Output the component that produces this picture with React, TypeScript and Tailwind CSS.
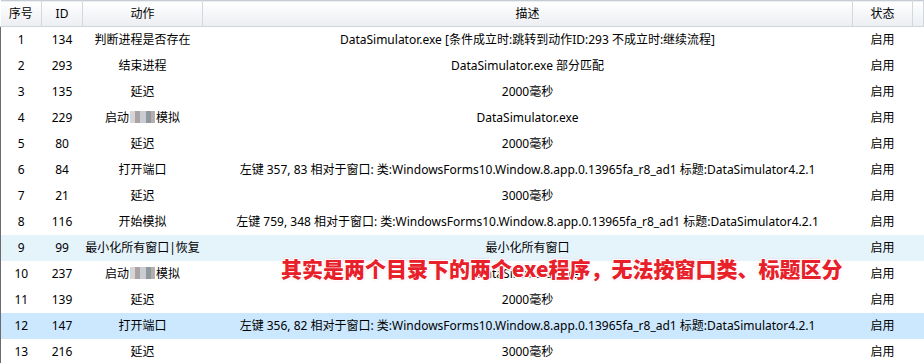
import React from "react";

interface Step {
  no: number;
  id: number;
  action: string;
  desc: string;
  state: string;
  blur?: boolean;
}

const steps: Step[] = [
  { no: 1, id: 134, action: "判断进程是否存在", desc: "DataSimulator.exe [条件成立时:跳转到动作ID:293 不成立时:继续流程]", state: "启用" },
  { no: 2, id: 293, action: "结束进程", desc: "DataSimulator.exe 部分匹配", state: "启用" },
  { no: 3, id: 135, action: "延迟", desc: "2000毫秒", state: "启用" },
  { no: 4, id: 229, action: "启动", desc: "DataSimulator.exe", state: "启用", blur: true },
  { no: 5, id: 80, action: "延迟", desc: "2000毫秒", state: "启用" },
  { no: 6, id: 84, action: "打开端口", desc: "左键 357, 83 相对于窗口: 类:WindowsForms10.Window.8.app.0.13965fa_r8_ad1 标题:DataSimulator4.2.1", state: "启用" },
  { no: 7, id: 21, action: "延迟", desc: "3000毫秒", state: "启用" },
  { no: 8, id: 116, action: "开始模拟", desc: "左键 759, 348 相对于窗口: 类:WindowsForms10.Window.8.app.0.13965fa_r8_ad1 标题:DataSimulator4.2.1", state: "启用" },
  { no: 9, id: 99, action: "最小化所有窗口|恢复", desc: "最小化所有窗口", state: "启用" },
  { no: 10, id: 237, action: "启动", desc: "DataSimulator.exe", state: "启用", blur: true },
  { no: 11, id: 139, action: "延迟", desc: "2000毫秒", state: "启用" },
  { no: 12, id: 147, action: "打开端口", desc: "左键 356, 82 相对于窗口: 类:WindowsForms10.Window.8.app.0.13965fa_r8_ad1 标题:DataSimulator4.2.1", state: "启用" },
  { no: 13, id: 216, action: "延迟", desc: "3000毫秒", state: "启用" },
];

// mosaic used to hide part of the action name
function Mosaic() {
  return (
    <span className="inline-flex h-[12px] align-[-1px] mx-[1px]">
      <span className="w-[5px] bg-[#d8d4d6]" />
      <span className="w-[5px] bg-[#a9a3a6]" />
      <span className="w-[6px] bg-[#c9ccd0]" />
      <span className="w-[5px] bg-[#8f989c]" />
      <span className="w-[4px] bg-[#b3aeb0]" />
    </span>
  );
}

export default function App() {
  return (
    <div
      className="relative w-[924px] h-[363px] overflow-hidden bg-white text-[12px] text-black"
      style={{ fontFamily: "'Noto Sans', 'Noto Sans CJK SC', sans-serif" }}
    >
      <table className="w-[924px] table-fixed border-collapse">
        <colgroup>
          <col className="w-[41px]" />
          <col className="w-[41px]" />
          <col className="w-[120px]" />
          <col className="w-[650px]" />
          <col className="w-[60px]" />
          <col />
        </colgroup>
        <thead>
          <tr className="h-[26px] bg-gradient-to-b from-white to-[#eceef2] border-t border-[#c6ccd4] border-b border-b-[#cfd5dc]">
            {["序号", "ID", "动作", "描述", "状态", ""].map((h, i) => (
              <th
                key={i}
                className="font-normal text-center p-0 border-r border-[#d3d8de] leading-[24px]"
              >
                {h}
              </th>
            ))}
          </tr>
        </thead>
        <tbody className="border-l border-[#6b6b6b]">
          {steps.map((s) => (
            <tr
              key={s.no}
              className={
                "h-[26px] " +
                (s.no === 12 ? "bg-[#cce8ff]" : s.no === 9 ? "bg-[#e5f3fb]" : "")
              }
            >
              <td className="text-center p-0 whitespace-nowrap">{s.no}</td>
              <td className="text-center p-0 whitespace-nowrap">{s.id}</td>
              <td className="text-center p-0 whitespace-nowrap">
                {s.blur ? (
                  <>
                    {s.action}
                    <Mosaic />
                    模拟
                  </>
                ) : (
                  s.action
                )}
              </td>
              <td className="text-center p-0 whitespace-nowrap">{s.desc}</td>
              <td className="text-center p-0 whitespace-nowrap">{s.state}</td>
              <td />
            </tr>
          ))}
        </tbody>
      </table>

      {/* annotation drawn over the grid */}
      <div
        className="absolute left-[281px] top-[255px] text-[21px] font-black leading-[26px] text-[#e8202a] whitespace-nowrap"
        style={{
          fontFamily: "'Noto Sans CJK SC', sans-serif",
          textShadow:
            "1px 1px 0 #fff, -1px -1px 0 #fff, 1px -1px 0 #fff, -1px 1px 0 #fff, 0 0 3px rgba(232,32,42,0.35)",
        }}
      >
        其实是两个目录下的两个exe程序，无法按窗口类、标题区分
      </div>
    </div>
  );
}
